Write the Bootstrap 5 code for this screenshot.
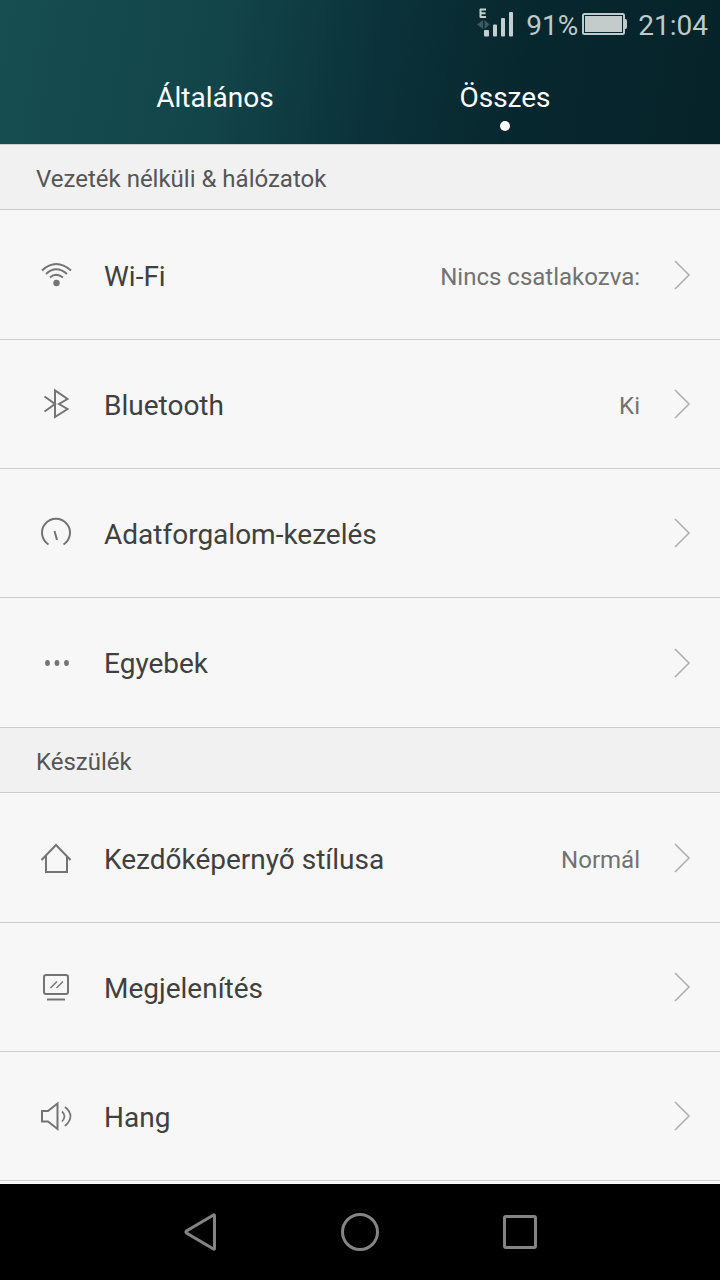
<!DOCTYPE html>
<html lang="hu">
<head>
<meta charset="utf-8">
<meta name="viewport" content="width=device-width, initial-scale=1">
<title>Beállítások</title>
<link href="https://cdn.jsdelivr.net/npm/bootstrap@5.3.0/dist/css/bootstrap.min.css" rel="stylesheet">
<style>
  body { font-family: Roboto, "Noto Sans", sans-serif; background: #f7f7f7; color: #404040; }
  svg { display: block; flex: none; fill: none; }
  .top-area { background: linear-gradient(100deg, #164e52 0%, #124549 30%, #0b323a 52%, #07272e 72%, #062329 100%); }
  .status-bar { height: 48px; padding: 4px 12px 0 0; color: #bccbcb; font-size: 28px; line-height: 44px; }
  .status-bar svg { margin-bottom: 4px; }
  .battery { margin: 0 10px 0 4px; }
  .signal { margin-right: 11px; }
  .tab-bar { height: 96px; padding: 0 70px; }
  .tab-btn { color: #fff; font-size: 28px; line-height: 36px; padding: 32px 0 0; border: 0; background: none; }
  .tab-dot { width: 10px; height: 10px; margin: 5px auto 0; border-radius: 50%; }
  .tab-btn[aria-selected="true"] .tab-dot { background: #fff; }
  .section-title { height: 66px; padding: 5px 36px 0; margin: 0; background: #f1f1f1; border: 1px solid #cbcbcb; border-width: 1px 0; font-size: 24px; font-weight: 400; color: #555; }
  .list-group { --bs-list-group-bg: #f7f7f7; --bs-list-group-color: #404040; --bs-list-group-border-color: #cbcbcb; }
  .setting-row { height: 129px; padding: 3px 28px 0 40px; border-width: 0 0 1px; font-size: 28px; }
  .setting-row:first-child { height: 130px; padding-top: 4px; }
  .list-group-flush > .closing-row:last-child { border-width: 0 0 1px; }
  .setting-row svg { margin-bottom: 3px; stroke: #747474; stroke-width: 2; }
  .setting-row .chevron { stroke: #adadad; stroke-width: 1.5; margin-left: 32px; }
  .setting-name { margin-left: 32px; }
  .setting-value { font-size: 24px; color: #727272; }
  .nav-keys { height: 96px; background: #000; padding: 0 120px; }
  .nav-keys button { padding: 0; border: 0; background: none; }
  .nav-keys svg { margin: auto; stroke: #848484; stroke-width: 3; }
</style>
</head>
<body class="d-flex flex-column min-vh-100">
<header class="top-area">
  <div class="status-bar d-flex align-items-center justify-content-end">
    <svg class="signal" width="38" height="32" viewBox="0 0 38 32" aria-label="Térerő">
      <path d="M3 1.500H9M3 5.200H8.500M3 9H9M3.500 1V9.500" stroke="#c3d0cf" stroke-width="2"/>
      <path d="M6 12v9l-6-4.500zM7.500 12v9l5-4.500z" fill="#3f5a5e"/>
      <g fill="#c3d0cf"><rect x="7" y="22" width="5" height="6.500" rx="1"/><rect x="16" y="16.500" width="4" height="12" rx="1"/><rect x="24" y="10" width="4" height="18.500" rx="1"/><rect x="32" y="4" width="4" height="24.500" rx="1"/></g>
    </svg>
    <span>91%</span>
    <svg class="battery" width="46" height="24" viewBox="0 0 46 24" aria-label="Akkumulátor">
      <rect x="1" y="2" width="41" height="20" rx="1.500" stroke="#bccbcb" stroke-width="2"/>
      <rect x="3" y="4" width="37" height="16" fill="#c3cccb"/>
      <path d="M42 7h1.500q1.500 0 1.500 2v6q0 2-1.500 2H42z" fill="#bccbcb"/>
    </svg>
    <span>21:04</span>
  </div>
  <div class="tab-bar row g-0" role="tablist">
    <button class="tab-btn col align-self-start" type="button" role="tab" aria-selected="false">Általános<span class="tab-dot d-block"></span></button>
    <button class="tab-btn col align-self-start" type="button" role="tab" aria-selected="true">Összes<span class="tab-dot d-block"></span></button>
  </div>
</header>

<main class="flex-grow-1">
  <h2 class="section-title d-flex align-items-center">Vezeték nélküli &amp; hálózatok</h2>
  <div class="list-group list-group-flush">
    <a href="#" class="setting-row list-group-item list-group-item-action d-flex align-items-center">
      <svg width="32" height="32"><path d="M2 11.500Q16-1.500 31 11.500M6 15Q16 5.500 27 15M10 18.500Q16 13 23 18.500"/><circle cx="16.500" cy="24" r="3.200" fill="#747474" stroke="none"/></svg>
      <span class="setting-name me-auto">Wi-Fi</span><span class="setting-value">Nincs csatlakozva:</span>
      <svg class="chevron" width="20" height="32"><path d="M3 2l14 14L3 30"/></svg>
    </a>
    <a href="#" class="setting-row list-group-item list-group-item-action d-flex align-items-center">
      <svg width="32" height="32"><path d="M4.500 8.500L15 16 4.500 23.500M15 2.500V29L27.500 21 19 16l8.500-5z"/></svg>
      <span class="setting-name me-auto">Bluetooth</span><span class="setting-value">Ki</span>
      <svg class="chevron" width="20" height="32"><path d="M3 2l14 14L3 30"/></svg>
    </a>
    <a href="#" class="setting-row list-group-item list-group-item-action d-flex align-items-center">
      <svg width="32" height="32"><path d="M8.500 27.500A14 14 0 1 1 23.500 27.500M14.500 14L17 23"/></svg>
      <span class="setting-name me-auto">Adatforgalom-kezelés</span>
      <svg class="chevron" width="20" height="32"><path d="M3 2l14 14L3 30"/></svg>
    </a>
    <a href="#" class="setting-row list-group-item list-group-item-action d-flex align-items-center border-bottom-0">
      <svg width="32" height="32"><g fill="#747474" stroke="none"><ellipse cx="7.500" cy="16" rx="2.400" ry="2.900"/><ellipse cx="17" cy="16" rx="2.400" ry="2.900"/><ellipse cx="26.500" cy="16" rx="2.400" ry="2.900"/></g></svg>
      <span class="setting-name me-auto">Egyebek</span>
      <svg class="chevron" width="20" height="32"><path d="M3 2l14 14L3 30"/></svg>
    </a>
  </div>

  <h2 class="section-title d-flex align-items-center">Készülék</h2>
  <div class="list-group list-group-flush">
    <a href="#" class="setting-row list-group-item list-group-item-action d-flex align-items-center">
      <svg width="32" height="32"><path d="M1.500 18L16 3 30.500 18M6 14V30H27V14"/></svg>
      <span class="setting-name me-auto">Kezdőképernyő stílusa</span><span class="setting-value">Normál</span>
      <svg class="chevron" width="20" height="32"><path d="M3 2l14 14L3 30"/></svg>
    </a>
    <a href="#" class="setting-row list-group-item list-group-item-action d-flex align-items-center">
      <svg width="32" height="32"><rect x="4" y="4" width="24" height="19" rx="2"/><path d="M7 28.500H25"/><path d="M10.500 17L17 10.500M16.500 17L23 10.500" stroke-width="1.400"/></svg>
      <span class="setting-name me-auto">Megjelenítés</span>
      <svg class="chevron" width="20" height="32"><path d="M3 2l14 14L3 30"/></svg>
    </a>
    <a href="#" class="setting-row closing-row list-group-item list-group-item-action d-flex align-items-center">
      <svg width="32" height="32"><path d="M2 11H8L17.500 3.500V29L8 21.500H2z"/><path d="M22 11.500Q27 16 22 21.500M25 7Q36 16 25 26" stroke-width="1.700"/></svg>
      <span class="setting-name me-auto">Hang</span>
      <svg class="chevron" width="20" height="32"><path d="M3 2l14 14L3 30"/></svg>
    </a>
  </div>
</main>

<nav class="nav-keys row g-0 align-items-center" aria-label="Navigáció">
  <button class="col" type="button" aria-label="Vissza"><svg width="40" height="40"><path d="M34.500 4V36.500Q34.500 37.500 33.500 37L6.500 21Q5.500 20 6.500 19L33.500 3Q34.500 2.500 34.500 4z"/></svg></button>
  <button class="col" type="button" aria-label="Kezdőlap"><svg width="40" height="40"><circle cx="20" cy="20" r="17.500"/></svg></button>
  <button class="col" type="button" aria-label="Legutóbbiak"><svg width="40" height="40"><rect x="4.500" y="4.500" width="31" height="31" rx="1.500"/></svg></button>
</nav>
<script src="https://cdn.jsdelivr.net/npm/bootstrap@5.3.0/dist/js/bootstrap.bundle.min.js"></script>
</body>
</html>
